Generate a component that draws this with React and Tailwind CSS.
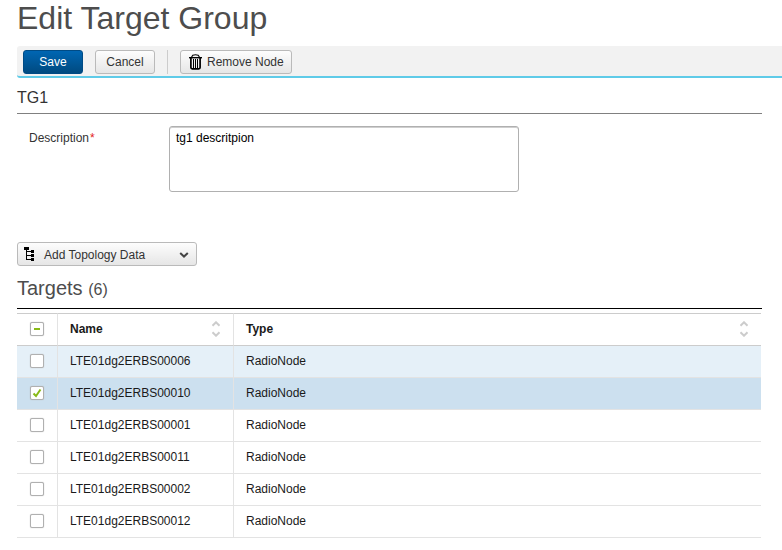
import { useEffect, useRef, useState } from "react";

const nodes = [
  "LTE01dg2ERBS00006",
  "LTE01dg2ERBS00010",
  "LTE01dg2ERBS00001",
  "LTE01dg2ERBS00011",
  "LTE01dg2ERBS00002",
  "LTE01dg2ERBS00012",
];

const buttonClass =
  "h-6 rounded-[3px] border border-[#bababa] bg-linear-to-b from-[#fdfdfd] to-[#e6e6e6] text-[#333333]";

function TrashIcon() {
  return (
    <svg className="h-4 w-[13px]" viewBox="0 0 13 16" fill="none" stroke="#000" aria-hidden="true">
      <path d="M2.5 3.2L3.8 1.2Q6.5 .2 9.2 1.2L10.5 3.2" strokeWidth="1.1" />
      <path d="M0 3.7h13" strokeWidth="1.4" />
      <path d="M1.9 4v9.6q0 1.3 1.3 1.3h6.6q1.3 0 1.3-1.3V4" strokeWidth="1.7" />
      <path d="M4.5 5v9.5M6.5 5v9.5M8.5 5v9.5" strokeWidth="1" />
    </svg>
  );
}

function TreeIcon() {
  return (
    <svg className="h-[14px] w-[11px]" viewBox="0 0 11 14" aria-hidden="true">
      <path d="M0 0h5v3H0zM2 3h1v10H2zM3 4h4v1H3zM3 8h4v1H3zM3 12h4v1H3z" fill="#000" />
      <path d="M7 3h3v3H7zM7 7h3v3H7zM7 11h3v3H7z" fill="#000" />
    </svg>
  );
}

function SortIcon() {
  return (
    <svg className="h-4 w-2" viewBox="0 0 8 16" fill="none" stroke="#cccccc" strokeWidth="2" aria-hidden="true">
      <path d="M0.5 4.7L4 1.3L7.5 4.7M0.5 11.3L4 14.7L7.5 11.3" />
    </svg>
  );
}

function Checkbox({ label, checked, mixed, onChange }) {
  const ref = useRef(null);
  useEffect(() => {
    ref.current.indeterminate = Boolean(mixed);
  }, [mixed]);
  return (
    <span className="relative mx-auto block size-[14px]">
      <input
        ref={ref}
        type="checkbox"
        aria-label={label}
        checked={checked}
        onChange={onChange}
        className="block size-[14px] appearance-none rounded-[2px] border border-[#b0b0b0] bg-white shadow-[0_0_1px_#b0b0b0]"
      />
      <svg className="pointer-events-none absolute inset-0 size-[14px]" viewBox="0 0 14 14" fill="none" stroke="#89ba17" strokeWidth="2" aria-hidden="true">
        {mixed && <path d="M4 7h6" />}
        {checked && !mixed && <path d="M3.5 7.5L6 10L10.5 3.5" />}
      </svg>
    </span>
  );
}

export default function App() {
  const [selected, setSelected] = useState([nodes[1]]);
  const [description, setDescription] = useState("tg1 descritpion");
  const toggle = (name) =>
    setSelected((s) => (s.includes(name) ? s.filter((n) => n !== name) : [...s, name]));
  const all = selected.length === nodes.length;

  return (
    <main className="bg-white pb-3 pl-[17px] font-['Liberation_Sans',Arial,sans-serif] text-xs text-[#333333]">
      <h1 className="mb-[10px] text-[32px] leading-9 text-[#4d4d4d]">Edit Target Group</h1>

      <div className="flex items-center rounded-l-[3px] border-b-2 border-[#5fcbe8] bg-[#f2f2f2] px-1.5 pt-1 pb-0.5">
        <button type="button" className="h-6 w-[60px] rounded-[3px] border border-[#004b85] bg-linear-to-b from-[#0066b3] to-[#004a80] text-white">
          Save
        </button>
        <button type="button" className={`${buttonClass} ml-3 w-[60px]`}>
          Cancel
        </button>
        <span className="mx-3 h-6 w-px bg-[#cccccc]" />
        <button type="button" className={`${buttonClass} flex w-28 items-center gap-[5px] pl-2`}>
          <TrashIcon />
          Remove Node
        </button>
      </div>

      <div className="pr-5">
        <h2 className="border-b border-[#808080] pt-[11px] pb-1.5 text-base leading-[18px]">TG1</h2>

        <div className="mt-3 flex items-start pl-3">
          <label htmlFor="description" className="w-[140px] pt-1 leading-4">
            Description<span className="ml-px text-[#e32119]">*</span>
          </label>
          <textarea
            id="description"
            value={description}
            onChange={(e) => setDescription(e.target.value)}
            className="block h-[66px] w-[350px] resize-none rounded-[3px] border border-[#b0b0b0] bg-white px-1.5 py-[3px] leading-4 text-black shadow-[inset_0_1px_0_#cfcfcf]"
          />
        </div>

        <button type="button" className={`${buttonClass} mt-[50px] flex w-[180px] items-center px-1.5`}>
          <TreeIcon />
          <span className="ml-[9px] flex flex-1 items-center justify-between pt-0.5">
            Add Topology Data
            <svg className="mr-px h-1.5 w-2.5" viewBox="0 0 10 6" fill="none" stroke="#444" strokeWidth="2" aria-hidden="true">
              <path d="M1.2 1L5 4.6L8.8 1" />
            </svg>
          </span>
        </button>

        <h2 className="mt-[10px] border-b border-black pb-1.5 text-xl leading-6 text-[#4d4d4d]">
          Targets <span className="text-base">(6)</span>
        </h2>

        <div className="mt-1 pr-px">
          <table className="w-full table-fixed border-separate border-spacing-0 text-left text-[#1a1a1a]">
            <colgroup>
              <col className="w-[41px]" />
              <col className="w-44" />
              <col />
            </colgroup>
            <thead>
              <tr className="h-[33px]">
                <th scope="col" className="border-y border-r border-y-[#cccccc] border-r-[#e3e3e3] px-0 pt-0 pb-0.5">
                  <Checkbox
                    label="Select all targets"
                    checked={all}
                    mixed={selected.length > 0 && !all}
                    onChange={() => setSelected(all ? [] : nodes)}
                  />
                </th>
                <th scope="col" className="border-y border-r border-y-[#cccccc] border-r-[#e3e3e3] pt-0 pr-[13px] pb-0.5 pl-3 font-bold">
                  <span className="flex items-center justify-between">
                    Name
                    <SortIcon />
                  </span>
                </th>
                <th scope="col" className="border-y border-[#cccccc] pt-0 pr-[13px] pb-0.5 pl-3 font-bold">
                  <span className="flex items-center justify-between">
                    Type
                    <SortIcon />
                  </span>
                </th>
              </tr>
            </thead>
            <tbody>
              {nodes.map((name, i) => (
                <tr
                  key={name}
                  className={`h-8 ${selected.includes(name) ? "bg-[#cce0ef]" : i === 0 ? "bg-[#e5f0f8]" : "bg-white"}`}
                >
                  <td className="border-r border-b border-[#e3e3e3] px-0 pt-0 pb-0.5">
                    <Checkbox label={`Select ${name}`} checked={selected.includes(name)} onChange={() => toggle(name)} />
                  </td>
                  <td className="border-r border-b border-[#e3e3e3] px-3 pt-0 pb-0.5">{name}</td>
                  <td className="border-b border-[#e3e3e3] px-3 pt-0 pb-0.5">RadioNode</td>
                </tr>
              ))}
            </tbody>
          </table>
        </div>
      </div>
    </main>
  );
}
